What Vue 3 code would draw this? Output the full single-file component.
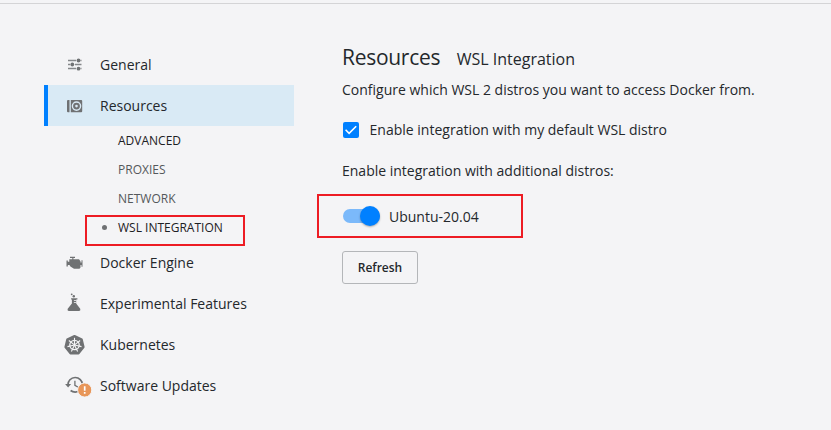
<script setup>
import { ref } from 'vue'

const top = [
  { id: 'general', label: 'General' },
  { id: 'resources', label: 'Resources', active: true },
]
const sub = [
  { label: 'ADVANCED', strong: true },
  { label: 'PROXIES' },
  { label: 'NETWORK' },
  { label: 'WSL INTEGRATION', strong: true, current: true },
]
const bottom = [
  { id: 'engine', label: 'Docker Engine' },
  { id: 'flask', label: 'Experimental Features' },
  { id: 'kubernetes', label: 'Kubernetes' },
  { id: 'updates', label: 'Software Updates' },
]
const spokes = [0, 1, 2, 3, 4, 5, 6].map((i) => (i * 360) / 7)
const useDefault = ref(true)
const ubuntu = ref(true)
</script>

<template>
  <div class="window">
    <div class="topline"></div>
    <div class="layout">
      <nav class="sidebar">
        <div v-for="item in top" :key="item.id" class="item" :class="{ active: item.active }">
          <span class="icon">
            <svg v-if="item.id === 'general'" width="24" height="24" viewBox="-0.5 0 24 24">
              <path d="M5.5 7.5h8M18 7.5h1M5.5 11.5h2M12.5 11.5h6.5M5.5 15.5h8M18 15.5h1" stroke="#85878a" stroke-width="1.3" />
              <circle cx="16" cy="7.5" r="1.9" /><circle cx="9.8" cy="11.5" r="1.9" /><circle cx="16" cy="15.7" r="1.9" />
            </svg>
            <svg v-else width="24" height="24" viewBox="-0.5 0 24 24">
              <path d="M4.5 7q0-1 1-1H7v12.3H5.5q-1 0-1-1zM8.3 6h10.4q1 0 1 1v10.3q0 1-1 1H8.3z" />
              <circle cx="14" cy="12.1" r="4.1" fill="none" stroke="#d9eaf5" stroke-width="1.4" />
              <circle cx="14" cy="12.1" r="1.3" fill="#d9eaf5" />
            </svg>
          </span>
          <span>{{ item.label }}</span>
        </div>
        <div class="sub">
          <div v-for="item in sub" :key="item.label" class="subitem" :class="{ strong: item.strong }">
            <i v-if="item.current" class="dot"></i>
            <span>{{ item.label }}</span>
          </div>
        </div>
        <div v-for="item in bottom" :key="item.id" class="item">
          <span class="icon">
            <svg v-if="item.id === 'engine'" width="24" height="24" viewBox="-0.5 0 24 24">
              <path d="M6.8 8.3h3V7H7.5V5.8h5V7h-1.6v1.3h5.6l1.5 1.9v1.2h1V9.2h1v6.6h-1v-1.9h-1v2.6l-1 1.2h-5.5l-3.6-2.2-.9-1.4H5.3v1.3H4v-6h1.3v1.3h1.5z" />
            </svg>
            <svg v-else-if="item.id === 'flask'" width="24" height="24" viewBox="-0.5 0 24 24">
              <circle cx="9.2" cy="2.3" r=".9" /><circle cx="11.3" cy="4.2" r="1.2" />
              <path d="M8.6 6.2h6.3v1.3h-1.2v4l4 5.2q.8 2-1 2.2H6.2q-1.8-.2-1-2.2l4.2-5.2v-4h-.8z" />
              <path d="M11.4 8.5h2.4M11.4 10.5h2.4" stroke="#f4f4f6" stroke-width=".8" />
            </svg>
            <svg v-else-if="item.id === 'kubernetes'" width="24" height="24" viewBox="-0.5 0 24 24">
              <path d="M12 2.9l7.3 3.5 1.8 7.7-5 6.3H7.9l-5-6.3 1.8-7.7z" stroke="#6f7173" stroke-width="2" stroke-linejoin="round" />
              <g fill="none" stroke="#f4f4f6">
                <circle cx="12" cy="12" r="4.7" stroke-width="1.3" />
                <path v-for="a in spokes" :key="a" d="M12 11V4.8" stroke-width="1.1" :transform="`rotate(${a} 12 12)`" />
              </g>
              <circle cx="12" cy="12" r="1.3" fill="#f4f4f6" />
            </svg>
            <svg v-else width="30" height="26" viewBox="-0.5 0 30 26">
              <path d="M5.4 11a7.3 7.3 0 1 1 7.3 7.1q-2.6 0-4.6-1.6" fill="none" stroke="#6f7173" stroke-width="1.7" />
              <path d="M2.6 9.9h6l-3 3.7z" />
              <path d="M12.4 6.8v4.5l3.3 2" fill="none" stroke="#6f7173" stroke-width="1.3" />
              <circle cx="22.2" cy="16" r="7.1" fill="#e89659" stroke="#f4f4f6" stroke-width="1" />
              <path d="M22.2 12.2v4.6M22.2 18v1.8" stroke="#fff" stroke-width="1.7" />
            </svg>
          </span>
          <span>{{ item.label }}</span>
        </div>
        <div class="mark mark-nav"></div>
      </nav>

      <main class="content">
        <header class="heading">
          <h1>Resources</h1>
          <h2>WSL Integration</h2>
        </header>
        <p class="intro">Configure which WSL 2 distros you want to access Docker from.</p>
        <div class="check" @click="useDefault = !useDefault">
          <span class="box" :class="{ on: useDefault }">
            <svg v-if="useDefault" width="16" height="16" viewBox="0 0 16 16">
              <path d="M2.6 7.8l3.5 3.5 7.1-7" fill="none" stroke="#fff" stroke-width="1.6" />
            </svg>
          </span>
          <span class="checklabel">Enable integration with my default WSL distro</span>
        </div>
        <p class="more">Enable integration with additional distros:</p>
        <div class="distro" @click="ubuntu = !ubuntu">
          <span class="switch" :class="{ on: ubuntu }"><i class="knob"></i></span>
          <span class="distroname">Ubuntu-20.04</span>
          <div class="mark mark-distro"></div>
        </div>
        <button class="refresh">Refresh</button>
      </main>
    </div>
  </div>
</template>

<style>
body {
  background: #f4f4f6;
}
</style>

<style scoped>
.window {
  box-sizing: border-box;
  height: 430px;
  padding-top: 3px;
  overflow: hidden;
  background: #f4f4f6;
  color: #24282c;
  font-family: "Open Sans", sans-serif;
  font-size: 14px;
}
.topline {
  height: 1px;
  background: #d4d4d6;
}
.layout {
  display: flex;
  gap: 48px;
  padding: 40px 0 0 44px;
}
.sidebar {
  position: relative;
  width: 250px;
}
.item {
  box-sizing: border-box;
  display: flex;
  align-items: center;
  gap: 14px;
  height: 41px;
  padding-left: 18px;
}
.item.active {
  padding-left: 14px;
  border-left: 4px solid #0080ff;
  background: #d9eaf5;
}
.icon {
  display: flex;
  width: 24px;
  height: 24px;
}
.icon svg {
  flex: none;
  fill: #6f7173;
}
.subitem {
  display: flex;
  align-items: center;
  height: 29px;
  padding-left: 74px;
  font-size: 12px;
  color: #55585b;
}
.subitem.strong {
  color: #1d2023;
}
.dot {
  width: 5px;
  height: 5px;
  margin: 0 11px 0 -16px;
  border-radius: 50%;
  background: #6f7173;
}
.mark {
  position: absolute;
  box-sizing: border-box;
  border: 2px solid #ed1c24;
  pointer-events: none;
}
.mark-nav {
  left: 41px;
  top: 171px;
  width: 160px;
  height: 31px;
}
.content {
  flex: 1;
}
.heading {
  display: flex;
  align-items: baseline;
  gap: 16.5px;
  height: 32px;
}
h1,
h2,
p {
  margin: 0;
  font-weight: 400;
}
h1 {
  font-size: 21px;
  line-height: 26px;
  letter-spacing: -0.28px;
}
h2 {
  font-size: 16px;
}
.intro {
  padding-top: 4px;
  line-height: 20px;
}
.check {
  display: flex;
  align-items: center;
  gap: 11px;
  height: 20px;
  margin-top: 20px;
  padding-left: 0.6px;
}
.checklabel {
  height: 20px;
  line-height: 19px;
}
.box {
  display: flex;
  width: 16px;
  height: 16px;
  border-radius: 2px;
  background: #c8ccd0;
}
.box.on {
  background: #0080ff;
}
.more {
  margin-top: 21px;
  line-height: 20px;
}
.distro {
  position: relative;
  display: flex;
  align-items: center;
  gap: 9px;
  height: 44px;
  margin-top: 13px;
}
.switch {
  display: flex;
  align-items: center;
  width: 37px;
  height: 14px;
  margin-left: 1px;
  border-radius: 7px;
  background: #b5babf;
}
.switch.on {
  justify-content: flex-end;
  background: #7bb9fa;
}
.knob {
  width: 20px;
  height: 20px;
  border-radius: 50%;
  background: #0080ff;
  box-shadow: 0 1px 2px rgba(0, 0, 0, 0.3);
}
.mark-distro {
  left: -25px;
  top: 0;
  width: 206px;
  height: 44px;
}
.refresh {
  display: block;
  width: 76px;
  height: 33px;
  margin-top: 13px;
  padding: 0;
  border: 1px solid #b4b6b9;
  border-radius: 3px;
  background: transparent;
  color: #24282c;
  font: 600 12px "Open Sans", sans-serif;
}
</style>
